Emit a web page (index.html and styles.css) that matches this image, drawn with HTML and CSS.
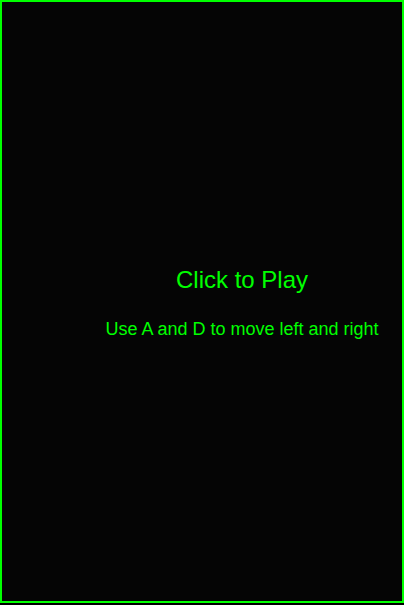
FILE: index.html
```html
<!DOCTYPE html>
<html>
<head>
<meta charset="utf-8">
<link rel="stylesheet" href="styles.css">
</head>
<body>
<div class="frame">
  <div class="title">Click to Play</div>
  <div class="hint">Use A and D to move left and right</div>
</div>
</body>
</html>
```
FILE: styles.css
```css
html, body {
  margin: 0;
  padding: 0;
  background: #000;
}
.frame {
  border: 2px solid #00ff00;
  background: #050505;
  display: flex;
  flex-direction: column;
  align-items: center;
  padding: 265px 0 0 80px;
  box-sizing: content-box;
  width: 320px;
  height: 334px;
  font-family: "Liberation Sans", Arial, sans-serif;
  color: #00ff00;
}
.title {
  font-size: 24px;
  line-height: 26px;
  white-space: nowrap;
}
.hint {
  margin-top: 26px;
  font-size: 18px;
  line-height: 20px;
  white-space: nowrap;
}
```
